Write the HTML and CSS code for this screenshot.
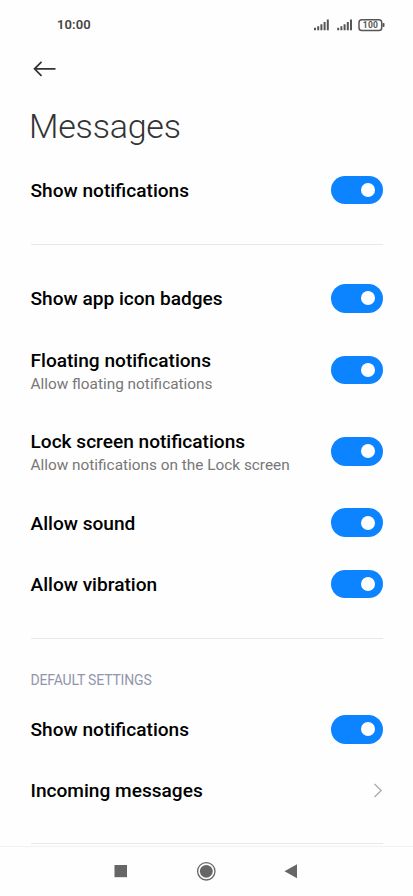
FILE: index.html
```html
<!DOCTYPE html>
<html lang="en">
<head>
<meta charset="utf-8">
<title>Messages</title>
<link rel="stylesheet" href="styles.css">
</head>
<body>
<div class="screen">
  <header class="status">
    <span class="time">10:00</span>
    <svg class="indicators" width="74" height="16" viewBox="0 0 74 16">
      <g fill="#555">
        <path d="M1 10.800h2v2.500h-2zM4.200 9.300h2v4h-2zM7.400 7.300h2v6h-2zM10.600 5h2v8.300h-2zM13.800 2.500h2v10.800h-2z"/>
        <path d="M24.200 10.800h2v2.500h-2zM27.400 9.300h2v4h-2zM30.600 7.300h2v6h-2zM33.800 5h2v8.300h-2zM37 2.500h2v10.800h-2z"/>
        <rect x="69.500" y="6" width="2" height="4" rx=".7"/>
      </g>
      <rect x="46" y="2.700" width="22.700" height="10.800" rx="2.800" fill="none" stroke="#555" stroke-width="1.500"/>
      <text class="charge" x="57.500" y="11.300" text-anchor="middle">100</text>
    </svg>
  </header>
  <div class="toolbar">
    <svg width="24" height="18" viewBox="0 0 24 18" fill="none" stroke="#333" stroke-width="1.700"><path d="M23.500 8.800H2.500M9.500 1.800L2.500 8.800l7 7"/></svg>
  </div>
  <h1 class="title">Messages</h1>
  <main class="settings">
    <div class="row"><span class="name">Show notifications</span><span class="toggle"></span></div>
    <hr class="divider">
    <div class="row"><span class="name">Show app icon badges</span><span class="toggle"></span></div>
    <div class="row tall"><div><div class="name">Floating notifications</div><div class="note">Allow floating notifications</div></div><span class="toggle"></span></div>
    <div class="row tall"><div><div class="name">Lock screen notifications</div><div class="note">Allow notifications on the Lock screen</div></div><span class="toggle"></span></div>
    <div class="row"><span class="name">Allow sound</span><span class="toggle"></span></div>
    <div class="row"><span class="name">Allow vibration</span><span class="toggle"></span></div>
    <hr class="divider">
    <h2 class="section">DEFAULT SETTINGS</h2>
    <div class="row"><span class="name">Show notifications</span><span class="toggle"></span></div>
    <div class="row link"><span class="name">Incoming messages</span><svg class="chevron" width="10" height="16" viewBox="0 0 10 16" fill="none" stroke="#aaa" stroke-width="1.300"><path d="M1.500 1L8.200 7.500l-6.700 6.500"/></svg></div>
    <hr class="divider last">
  </main>
  <nav class="navbar">
    <svg width="413" height="49" viewBox="0 0 413 49">
      <rect x="114.500" y="18" width="12.500" height="12.200" fill="#666"/>
      <circle cx="206.300" cy="24.300" r="8.700" fill="none" stroke="#666" stroke-width="1.300"/>
      <circle cx="206.300" cy="24.300" r="6.400" fill="#666"/>
      <path d="M284.500 24.200L297 17.200v14z" fill="#666"/>
    </svg>
  </nav>
</div>
</body>
</html>
```
FILE: styles.css
```css
* { box-sizing: border-box; }
body { margin: 0; background: #fefefe; font-family: Roboto, sans-serif; color: #000; }
.screen { width: 413px; height: 896px; overflow: hidden; display: flex; flex-direction: column; }
.status { height: 49px; padding: 0 26px 0 57px; display: flex; align-items: center; justify-content: space-between; flex: none; }
.time { font-size: 13px; font-weight: 600; letter-spacing: .1px; color: #444; }
.indicators { display: block; }
.charge { font-size: 8.500px; font-weight: 700; fill: #555; letter-spacing: .3px; }
.toolbar { height: 39px; padding: 11px 0 0 32px; flex: none; }
.toolbar svg { display: block; }
.title { margin: 0; padding-left: 29px; height: 71.500px; line-height: 76px; font-size: 34px; letter-spacing: -.2px; font-weight: 300; color: #333; flex: none; }
.settings { padding: 0 30.500px; flex: none; height: 686.500px; }
.row { height: 61.300px; display: flex; align-items: center; justify-content: space-between; }
.tall { height: 81.500px; }
.name { font-size: 19.100px; font-weight: 500; line-height: 24px; padding-top: 2px; }
.link .name { padding-top: 0; }
.note { font-size: 15.370px; line-height: 22px; margin-bottom: -2px; color: #777; }
.toggle { width: 51.500px; height: 28.500px; border-radius: 15px; background: #0d84ff; display: flex; align-items: center; justify-content: flex-end; padding-right: 7.500px; }
.toggle::after { content: ""; width: 14px; height: 14px; border-radius: 50%; background: #fff; }
.divider { border: 0; height: 1px; background: #e8e8e8; margin: 23px 0; }
.section { margin: 0; height: 37px; line-height: 36px; font-size: 14px; letter-spacing: -.18px; font-weight: 400; color: #9295ab; }
.last { margin: 22px 0 0; }
.navbar { height: 50px; border-top: 1px solid #f1f1f1; flex: none; }
.navbar svg { display: block; }
```
